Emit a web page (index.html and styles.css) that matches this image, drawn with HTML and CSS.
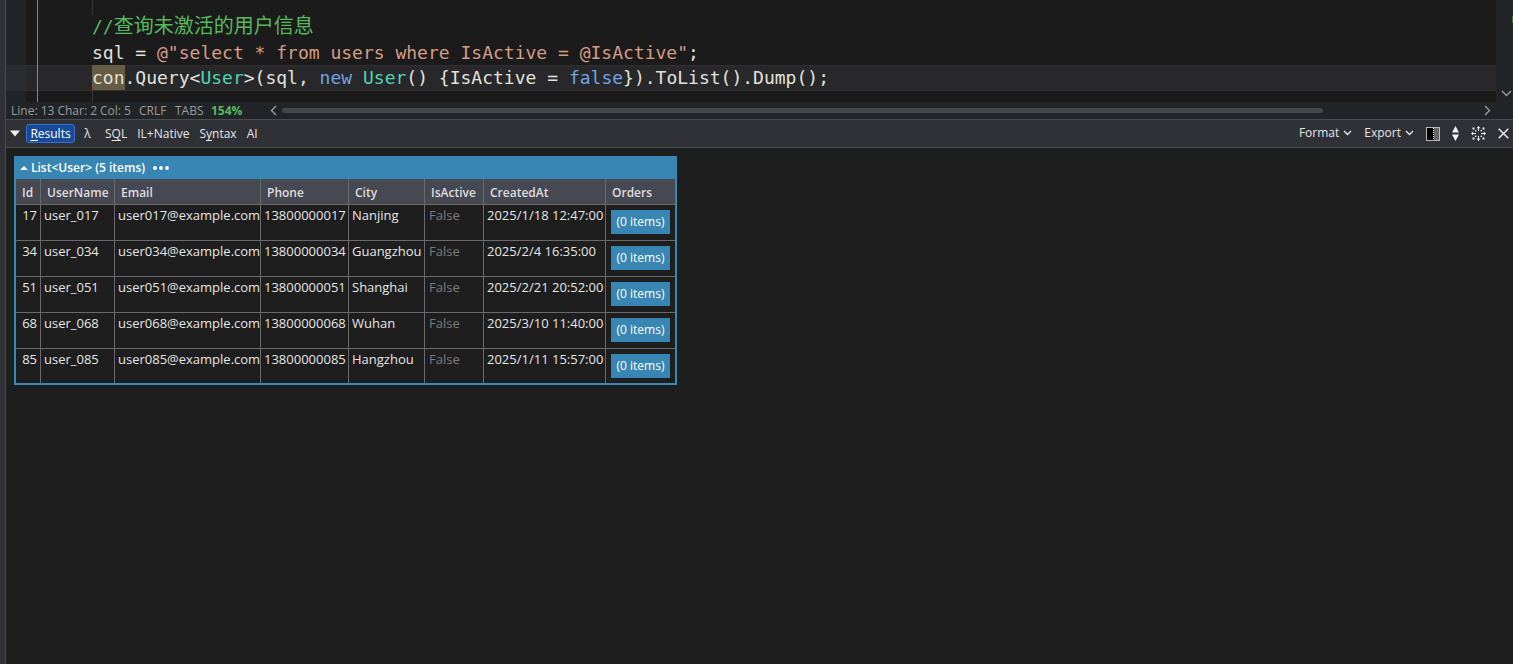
FILE: index.html
```html
<!DOCTYPE html>
<html lang="zh-CN">
<head>
    <meta charset="UTF-8">
    <meta name="viewport" content="width=device-width, initial-scale=1.0">
    <title>Query</title>
    <link rel="stylesheet" href="styles.css">
</head>
<body>
    <div class="window">
        <section class="editor">
            <div class="editor-main">
                <div class="editor-code">
                    <div class="line line-part"><span class="gutter"></span><span class="fold"></span><span class="guide"></span></div>
                    <div class="line"><span class="gutter"></span><span class="fold"></span><code class="comment">//<span class="cjk">查询未激活的用户信息</span></code></div>
                    <div class="line"><span class="gutter"></span><span class="fold"></span><code>sql = <span class="string">@"select * from users where IsActive = @IsActive"</span>;</code></div>
                    <div class="line current"><span class="gutter"></span><span class="fold"></span><code><span class="match">con</span>.Query&lt;<span class="type">User</span>&gt;(sql, <span class="keyword">new</span> <span class="type">User</span>() {IsActive = <span class="keyword">false</span>}).ToList().Dump();</code></div>
                    <div class="line line-end"><span class="gutter"></span><span class="fold"></span><span class="guide"></span></div>
                </div>
                <div class="status">
                    <div class="position"><span>Line: 13</span><span>Char: 2</span><span>Col: 5</span></div>
                    <span class="mode">CRLF</span>
                    <span class="mode">TABS</span>
                    <span class="zoom">154%</span>
                    <div class="hscroll">
                        <svg width="7" height="11" viewBox="0 0 7 11"><path d="M6 1L1.500 5.500L6 10"/></svg>
                        <div class="track"><div class="thumb"></div></div>
                        <svg width="7" height="11" viewBox="0 0 7 11"><path d="M1 1L5.500 5.500L1 10"/></svg>
                    </div>
                </div>
            </div>
            <div class="vscroll">
                <span class="marker"></span>
                <svg width="11" height="7" viewBox="0 0 11 7"><path d="M1 1L5.500 5.500L10 1"/></svg>
            </div>
        </section>

        <nav class="toolbar">
            <button class="icon-button collapse" aria-label="Collapse"><svg width="10" height="7" viewBox="0 0 10 7"><path class="solid" d="M0 0.500H10L5 6.500Z"/></svg></button>
            <button class="tab active"><u>R</u>esults</button>
            <button class="tab lambda">λ</button>
            <button class="tab">S<u>Q</u>L</button>
            <button class="tab">IL+Native</button>
            <button class="tab">S<u>y</u>ntax</button>
            <button class="tab">AI</button>
            <div class="tools">
                <button class="menu">Format <svg width="9" height="6" viewBox="0 0 9 6"><path d="M1 1L4.500 4.500L8 1"/></svg></button>
                <button class="menu">Export <svg width="9" height="6" viewBox="0 0 9 6"><path d="M1 1L4.500 4.500L8 1"/></svg></button>
                <button class="icon-button" aria-label="Split view">
                    <svg width="14" height="14" viewBox="0 0 14 14">
                        <rect x="0.500" y="0.500" width="13" height="13" fill="#000" stroke="#b8b8b8" stroke-width="1"/>
                        <rect x="8" y="1" width="5" height="12" fill="#666" stroke="none"/>
                        <path d="M7.500 1V13" stroke="#fff" stroke-width="1" stroke-dasharray="1 1"/>
                    </svg>
                </button>
                <button class="icon-button" aria-label="Resize">
                    <svg width="7" height="15" viewBox="0 0 7 15"><path class="solid" d="M3.500 0L7 6.500H0ZM0 8.500H7L3.500 15Z"/></svg>
                </button>
                <button class="icon-button" aria-label="Highlight">
                    <svg width="15" height="15" viewBox="0 0 15 15">
                        <path stroke-width="1" d="M7.500 1.500V5M7.500 10V13.500M1.500 7.500H5M10 7.500H13.500"/>
                        <path class="solid" d="M5.500 2.200L7.500 0L9.500 2.200ZM5.500 12.800L7.500 15L9.500 12.800ZM2.200 5.500L0 7.500L2.200 9.500ZM12.800 5.500L15 7.500L12.800 9.500Z"/>
                        <g class="solid">
                            <rect x="1.500" y="1.500" width="2" height="2"/><rect x="11.500" y="1.500" width="2" height="2"/>
                            <rect x="1.500" y="11.500" width="2" height="2"/><rect x="11.500" y="11.500" width="2" height="2"/>
                            <rect x="4" y="4" width="1.400" height="1.400"/><rect x="9.600" y="4" width="1.400" height="1.400"/>
                            <rect x="4" y="9.600" width="1.400" height="1.400"/><rect x="9.600" y="9.600" width="1.400" height="1.400"/>
                        </g>
                    </svg>
                </button>
                <button class="icon-button" aria-label="Close">
                    <svg width="11" height="11" viewBox="0 0 11 11"><path d="M0.700 0.700L10.300 10.300M10.300 0.700L0.700 10.300"/></svg>
                </button>
            </div>
        </nav>

        <main class="results">
            <div class="dump">
                <div class="dump-title">
                    <button class="toggle"><svg width="8" height="4" viewBox="0 0 8 4"><path d="M0 4L4 0L8 4Z"/></svg>List&lt;User&gt; (5 items)</button>
                    <button class="more" aria-label="More"><svg width="16" height="4" viewBox="0 0 16 4"><circle cx="2" cy="2" r="1.900"/><circle cx="8" cy="2" r="1.900"/><circle cx="14" cy="2" r="1.900"/></svg></button>
                </div>
                <table>
                    <colgroup>
                        <col class="col-id"><col class="col-name"><col class="col-email"><col class="col-phone">
                        <col class="col-city"><col class="col-active"><col class="col-created"><col class="col-orders">
                    </colgroup>
                    <thead>
                        <tr><th>Id</th><th>UserName</th><th>Email</th><th>Phone</th><th>City</th><th>IsActive</th><th>CreatedAt</th><th>Orders</th></tr>
                    </thead>
                    <tbody>
                        <tr><td class="num">17</td><td>user_017</td><td>user017@example.com</td><td>13800000017</td><td>Nanjing</td><td class="false">False</td><td>2025/1/18 12:47:00</td><td class="orders"><button class="items">(0 items)</button></td></tr>
                        <tr><td class="num">34</td><td>user_034</td><td>user034@example.com</td><td>13800000034</td><td>Guangzhou</td><td class="false">False</td><td>2025/2/4 16:35:00</td><td class="orders"><button class="items">(0 items)</button></td></tr>
                        <tr><td class="num">51</td><td>user_051</td><td>user051@example.com</td><td>13800000051</td><td>Shanghai</td><td class="false">False</td><td>2025/2/21 20:52:00</td><td class="orders"><button class="items">(0 items)</button></td></tr>
                        <tr><td class="num">68</td><td>user_068</td><td>user068@example.com</td><td>13800000068</td><td>Wuhan</td><td class="false">False</td><td>2025/3/10 11:40:00</td><td class="orders"><button class="items">(0 items)</button></td></tr>
                        <tr><td class="num">85</td><td>user_085</td><td>user085@example.com</td><td>13800000085</td><td>Hangzhou</td><td class="false">False</td><td>2025/1/11 15:57:00</td><td class="orders"><button class="items">(0 items)</button></td></tr>
                    </tbody>
                </table>
            </div>
        </main>
    </div>
</body>
</html>
```
FILE: styles.css
```css
* {
    box-sizing: border-box;
}
body {
    margin: 0;
    padding-left: 5px;
    background-color: #2f3136;
    color: #e6e6e6;
    font-family: "Open Sans", "Noto Sans", "Noto Sans CJK SC", sans-serif;
    font-size: 13px;
}
button {
    margin: 0;
    padding: 0;
    border: none;
    background: none;
    color: inherit;
    font: inherit;
    cursor: pointer;
}
svg {
    display: block;
    flex: none;
    fill: none;
    stroke: currentColor;
    stroke-width: 1.4;
}
.solid {
    fill: currentColor;
    stroke: none;
}
u {
    text-decoration-skip-ink: none;
    text-underline-offset: 2px;
}
.window {
    display: flex;
    flex-direction: column;
    min-height: 100vh;
    border-left: 1px solid #4a4b50;
}

/* editor */
.editor {
    display: flex;
    background-color: #222528;
}
.editor-main {
    flex: 1;
    min-width: 0;
}
.editor-code {
    background-color: #1b1b1c;
    overflow: hidden;
}
.line {
    display: flex;
    height: 25px;
}
.line-part {
    height: 15px;
}
.line-end {
    height: 11px;
}
.gutter {
    width: 20px;
    background-color: #222528;
}
.fold {
    width: 12px;
    margin-right: 54px;
    border-right: 1px solid #858585;
}
.guide {
    border-left: 1px solid #38383a;
}
code {
    font-family: "DejaVu Sans Mono", "Noto Sans CJK SC", monospace;
    font-size: 18px;
    line-height: 25px;
    color: #e2e2dc;
    white-space: pre;
}
.current {
    height: 26px;
    background-color: #28282a;
    box-shadow: inset 0 1px #303032, inset 0 -1px #303032;
}
.current .gutter {
    background-color: #2b2c30;
}
.comment {
    color: #57b95b;
    line-height: 22px;
}
.cjk {
    font-size: 20px;
}
.string {
    color: #d69d85;
}
.type {
    color: #4ed5b4;
}
.keyword {
    color: #6ca6e8;
}
.match {
    display: inline-block;
    background-color: #655c43;
}
.status {
    display: flex;
    align-items: center;
    height: 17px;
    padding-left: 5px;
    color: #9a9b9d;
    font-size: 12px;
    line-height: 16px;
    white-space: nowrap;
}
.position {
    display: flex;
    gap: 3px;
    width: 128px;
}
.mode {
    width: 36px;
}
.zoom {
    width: 59px;
    color: #57b95b;
    font-weight: bold;
}
.hscroll {
    display: flex;
    flex: 1;
    align-items: center;
    gap: 5px;
    padding-right: 5px;
}
.track {
    flex: 1;
}
.thumb {
    width: 87%;
    height: 5px;
    border-radius: 3px;
    background-color: #45464a;
}
.vscroll {
    display: flex;
    flex-direction: column;
    align-items: center;
    justify-content: space-between;
    width: 17px;
    padding: 16px 0 22px;
    color: #9a9b9d;
}
.vscroll svg {
    margin-left: 4px;
}
.marker {
    align-self: flex-end;
    width: 1px;
    height: 7px;
    background-color: #138a13;
}

/* toolbar */
.toolbar {
    display: flex;
    align-items: center;
    height: 29px;
    padding: 0 4px;
    border-top: 1px solid #4a4b50;
    border-bottom: 1px solid #4a4b50;
    font-size: 12px;
    line-height: 17px;
}
.collapse {
    margin-right: 6px;
    color: #fff;
}
.tab {
    height: 19px;
    margin-right: 10px;
    white-space: nowrap;
}
.tab.active {
    width: 49px;
    margin-right: 8px;
    border: 1px solid #3573cc;
    border-radius: 3px;
    background-color: #174a98;
    color: #fff;
}
.lambda {
    width: 9px;
    margin-right: 13px;
}
.tools {
    display: flex;
    align-items: center;
    gap: 12px;
    margin-left: auto;
}
.menu {
    display: flex;
    align-items: center;
    gap: 4px;
    padding-bottom: 2px;
}
.icon-button {
    display: flex;
    color: #f0f0f0;
}

/* results */
.results {
    flex: 1;
    padding: 8px;
    background-color: #1e1e1f;
}
.dump {
    width: 663px;
    border: 2px solid #3886b4;
    border-top: none;
}
.dump-title {
    display: flex;
    align-items: center;
    gap: 8px;
    height: 23px;
    padding-left: 4px;
    background-color: #3886b4;
    color: #fff;
    font-size: 12px;
    font-weight: 600;
}
.toggle {
    display: flex;
    align-items: center;
    gap: 3px;
}
.dump-title svg {
    fill: currentColor;
    stroke: none;
}
table {
    width: 100%;
    table-layout: fixed;
    border-spacing: 0;
}
.col-id {
    width: 25px;
}
.col-name {
    width: 74px;
}
.col-email {
    width: 146px;
}
.col-phone {
    width: 88px;
}
.col-city {
    width: 76px;
}
.col-active {
    width: 59px;
}
.col-created {
    width: 122px;
}
.col-orders {
    width: 69px;
}
th, td {
    border-right: 1px solid #6a6a6c;
    border-bottom: 1px solid #6a6a6c;
    text-align: left;
    white-space: nowrap;
    line-height: 18px;
}
th:last-child, td:last-child {
    border-right: none;
}
tbody tr:last-child td {
    border-bottom: none;
}
th {
    height: 26px;
    padding: 2px 6px 0;
    background-color: #464852;
    color: #dedede;
    font-size: 12px;
    font-weight: 600;
}
td {
    height: 36px;
    padding: 1px 3px;
    vertical-align: top;
}
tbody tr:last-child td {
    height: 34px;
}
.num {
    text-align: right;
}
.false {
    padding-left: 4px;
    color: #7c7c7c;
}
.orders {
    padding: 5px;
}
.items {
    display: block;
    width: 59px;
    height: 24px;
    background-color: #3886b4;
    color: #fff;
    font-size: 12px;
}
```
